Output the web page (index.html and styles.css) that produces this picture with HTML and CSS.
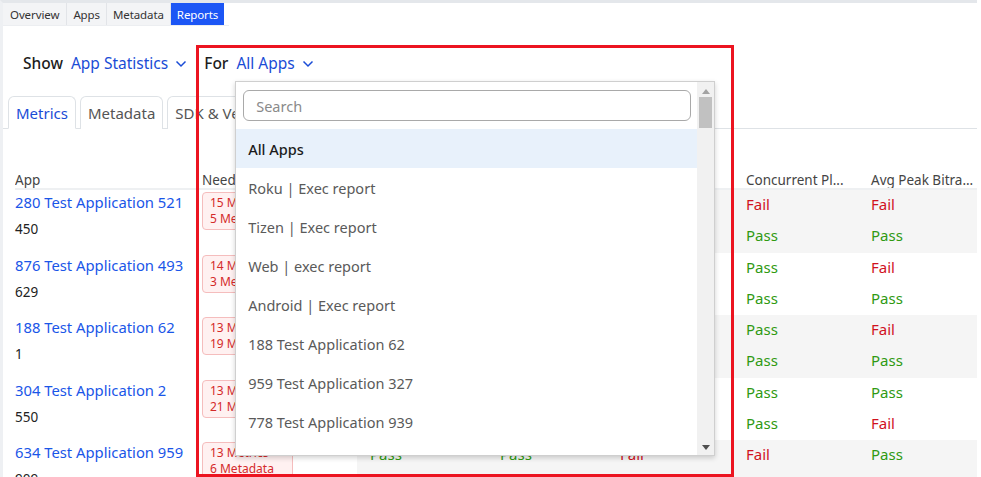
FILE: index.html
```html
<!DOCTYPE html>
<html>
<head>
<meta charset="utf-8">
<link rel="stylesheet" href="styles.css">
</head>
<body>
<div class="page">
  <nav class="topnav">
    <a class="topnav-item">Overview</a>
    <a class="topnav-item">Apps</a>
    <a class="topnav-item">Metadata</a>
    <a class="topnav-item active">Reports</a>
  </nav>

  <div class="toolbar">
    <div class="selector">
      <span class="sel-label">Show</span>
      <span class="sel-value">App Statistics</span>
      <svg class="chev" width="12" height="8" viewBox="0 0 12 8"><path d="M1.5 1.5 L6 6 L10.5 1.5" fill="none" stroke="currentColor" stroke-width="1.5"/></svg>
    </div>
    <div class="selector for">
      <span class="sel-label">For</span>
      <span class="sel-value">All Apps</span>
      <svg class="chev" width="12" height="8" viewBox="0 0 12 8"><path d="M1.5 1.5 L6 6 L10.5 1.5" fill="none" stroke="currentColor" stroke-width="1.5"/></svg>
      <div class="dropdown">
        <div class="dd-body">
          <div class="dd-search"><span class="ph">Search</span></div>
          <div class="dd-item selected">All Apps</div>
          <div class="dd-item">Roku | Exec report</div>
          <div class="dd-item">Tizen | Exec report</div>
          <div class="dd-item">Web | exec report</div>
          <div class="dd-item">Android | Exec report</div>
          <div class="dd-item">188 Test Application 62</div>
          <div class="dd-item">959 Test Application 327</div>
          <div class="dd-item">778 Test Application 939</div>
        </div>
        <div class="dd-scroll">
          <svg class="sb-arrow" width="8" height="5" viewBox="0 0 8 5"><path d="M0 5 L4 0 L8 5Z" fill="#a3a3a3"/></svg>
          <div class="sb-thumb"></div>
          <div class="sb-fill"></div>
          <svg class="sb-arrow" width="8" height="5" viewBox="0 0 8 5"><path d="M0 0 L8 0 L4 5Z" fill="#505050"/></svg>
        </div>
      </div>
    </div>
  </div>

  <div class="tabs">
    <div class="tab active">Metrics</div>
    <div class="tab">Metadata</div>
    <div class="tab">SDK &amp; Versions</div>
  </div>

  <div class="table">
    <div class="thead">
      <div class="th">App</div>
      <div class="th">Needs Attention</div>
      <div class="th">Startup Time</div>
      <div class="th">Rebuffering</div>
      <div class="th">Exits Before</div>
      <div class="th">Concurrent Pl...</div>
      <div class="th">Avg Peak Bitra...</div>
    </div>

    <div class="row odd">
      <div class="c-app"><a class="app-link">280 Test Application 521</a><div class="app-id">450</div></div>
      <div class="c-need"><div class="badge">15 Metrics<br>5 Metadata</div></div>
      <div class="c-m"><span class="pass">Pass</span><span class="pass">Pass</span></div>
      <div class="c-m"><span class="pass">Pass</span><span class="pass">Pass</span></div>
      <div class="c-m"><span class="fail">Fail</span><span class="pass">Pass</span></div>
      <div class="c-m"><span class="fail">Fail</span><span class="pass">Pass</span></div>
      <div class="c-m"><span class="fail">Fail</span><span class="pass">Pass</span></div>
    </div>
    <div class="row">
      <div class="c-app"><a class="app-link">876 Test Application 493</a><div class="app-id">629</div></div>
      <div class="c-need"><div class="badge">14 Metrics<br>3 Metadata</div></div>
      <div class="c-m"><span class="pass">Pass</span><span class="pass">Pass</span></div>
      <div class="c-m"><span class="pass">Pass</span><span class="pass">Pass</span></div>
      <div class="c-m"><span class="fail">Fail</span><span class="pass">Pass</span></div>
      <div class="c-m"><span class="pass">Pass</span><span class="pass">Pass</span></div>
      <div class="c-m"><span class="fail">Fail</span><span class="pass">Pass</span></div>
    </div>
    <div class="row odd">
      <div class="c-app"><a class="app-link">188 Test Application 62</a><div class="app-id">1</div></div>
      <div class="c-need"><div class="badge">13 Metrics<br>19 Metadata</div></div>
      <div class="c-m"><span class="pass">Pass</span><span class="pass">Pass</span></div>
      <div class="c-m"><span class="pass">Pass</span><span class="pass">Pass</span></div>
      <div class="c-m"><span class="fail">Fail</span><span class="pass">Pass</span></div>
      <div class="c-m"><span class="pass">Pass</span><span class="pass">Pass</span></div>
      <div class="c-m"><span class="fail">Fail</span><span class="pass">Pass</span></div>
    </div>
    <div class="row">
      <div class="c-app"><a class="app-link">304 Test Application 2</a><div class="app-id">550</div></div>
      <div class="c-need"><div class="badge">13 Metrics<br>21 Metadata</div></div>
      <div class="c-m"><span class="pass">Pass</span><span class="pass">Pass</span></div>
      <div class="c-m"><span class="pass">Pass</span><span class="pass">Pass</span></div>
      <div class="c-m"><span class="fail">Fail</span><span class="pass">Pass</span></div>
      <div class="c-m"><span class="pass">Pass</span><span class="pass">Pass</span></div>
      <div class="c-m"><span class="pass">Pass</span><span class="fail">Fail</span></div>
    </div>
    <div class="row odd">
      <div class="c-app"><a class="app-link">634 Test Application 959</a><div class="app-id">909</div></div>
      <div class="c-need"><div class="badge">13 Metrics <span class="eq">=</span><br>6 Metadata</div></div>
      <div class="c-m"><span class="pass">Pass</span><span class="pass">Pass</span></div>
      <div class="c-m"><span class="pass">Pass</span><span class="pass">Pass</span></div>
      <div class="c-m"><span class="fail">Fail</span><span class="pass">Pass</span></div>
      <div class="c-m"><span class="fail">Fail</span><span class="pass">Pass</span></div>
      <div class="c-m"><span class="pass">Pass</span><span class="pass">Pass</span></div>
    </div>
  </div>

  <div class="annotation"></div>
</div>
</body>
</html>
```
FILE: styles.css
```css
* { box-sizing: border-box; }
html, body { margin: 0; padding: 0; }
body {
  background: #ffffff;
  font-family: "Noto Sans", "Open Sans", sans-serif;
  color: #222;
  overflow: hidden;
}
.page {
  position: relative;
  width: 977px;
  height: 477px;
  border-top: 3px solid #e4e7eb;
  border-left: 3px solid #eef0f3;
  background: #fff;
  overflow: hidden;
}
.topnav {
  display: flex;
  height: 23px;
  border-bottom: 1px solid #eceef1;
  width: 226px;
}
.topnav-item {
  display: flex;
  align-items: center;
  padding: 0 6px;
  font-size: 11.5px;
  letter-spacing: -0.1px;
  color: #333;
  background: #f3f4f6;
  border-right: 1px solid #e2e4e8;
}
.topnav-item:first-child { padding: 0 7px; }
.topnav-item.active {
  background: #1c56f5;
  color: #fff;
  border-right: none;
}

.toolbar {
  display: flex;
  align-items: center;
  height: 24px;
  margin-top: 25px;
  padding-left: 20px;
  gap: 17px;
}
.selector {
  display: flex;
  align-items: center;
  position: relative;
  font-size: 15.5px;
}
.sel-label { font-weight: 500; color: #1d1d1d; margin-right: 8px; }
.sel-value { color: #1a4cd6; }
.chev { color: #1a4cd6; margin-left: 7px; margin-top: 1px; }

.dropdown {
  position: absolute;
  left: 31px;
  top: 29px;
  width: 480px;
  height: 375px;
  background: #fff;
  border: 1px solid #cfcfcf;
  box-shadow: 0 2px 5px rgba(0,0,0,0.18);
  display: flex;
  z-index: 5;
}
.dd-body { flex: 1; display: flex; flex-direction: column; }
.dd-search {
  margin: 8px 6px 8px 7px;
  height: 31px;
  border: 1px solid #a9a9a9;
  border-radius: 6px;
  display: flex;
  align-items: center;
  padding-left: 12px;
  font-size: 14.5px;
}
.ph { color: #8a8a8a; }
.dd-item {
  height: 39px;
  display: flex;
  align-items: center;
  padding-left: 12px;
  font-size: 14.5px;
  color: #5a5a5a;
}
.dd-item.selected {
  background: #e8f1fb;
  color: #1b1b1b;
  font-weight: 500;
}
.dd-scroll {
  width: 17px;
  background: #f1f1f1;
  display: flex;
  flex-direction: column;
  align-items: center;
  padding: 7px 0 5px;
}
.sb-arrow { flex: none; }
.sb-thumb {
  width: 13px;
  height: 31px;
  margin-top: 3px;
  background: #c1c1c1;
}
.sb-fill { flex: 1; }

.tabs {
  display: flex;
  margin-top: 21px;
  padding-left: 5px;
  border-bottom: 1px solid #dee2e6;
  gap: 4px;
}
.tab {
  height: 33px;
  padding: 0 7px;
  display: flex;
  align-items: center;
  font-size: 15px;
  color: #555;
  border: 1px solid #dee2e6;
  border-bottom: none;
  border-radius: 6px 6px 0 0;
  margin-bottom: -1px;
  background: #fff;
}
.tab.active { color: #1a4cd6; border-bottom: 1px solid #fff; }

.table {
  margin-top: 42px;
  margin-left: 12px;
}
.thead, .row {
  display: grid;
  grid-template-columns: 187px 155px 130px 120px 126px 125px 119px;
}
.thead {
  height: 19px;
  border-bottom: 2px solid #eef0f2;
}
.th {
  font-size: 13.5px;
  color: #444;
  white-space: nowrap;
  overflow: hidden;
  line-height: 18px;
}
.th:nth-child(n+3) { padding-left: 13px; }
.row { height: 62.5px; }
.c-app { padding-top: 1px; }
.app-link {
  display: block;
  color: #1a56e8;
  font-size: 14.8px;
  line-height: 22px;
  white-space: nowrap;
}
.app-id {
  font-size: 13.5px;
  color: #222;
  margin-top: 7px;
}
.c-need { padding-top: 2px; }
.badge {
  display: inline-block;
  width: 91px;
  font-size: 12px;
  line-height: 16px;
  color: #d42a2a;
  background: #fff1f1;
  border: 1px solid #f5bdbd;
  border-radius: 4px;
  padding: 2px 0 2px 7px;
  white-space: nowrap;
  overflow: hidden;
}
.eq { color: #999; }
.c-m {
  display: flex;
  flex-direction: column;
  padding-left: 13px;
  font-size: 15px;
}
.row.odd .c-m { background: #f5f5f5; }
.c-m span { height: 31.25px; line-height: 28px; }
.pass { color: #2f9a12; }
.fail { color: #d0121e; }

.annotation {
  position: absolute;
  left: 193px;
  top: 42px;
  width: 538px;
  height: 432px;
  border: 3px solid #ec1420;
  z-index: 10;
  pointer-events: none;
}
```
